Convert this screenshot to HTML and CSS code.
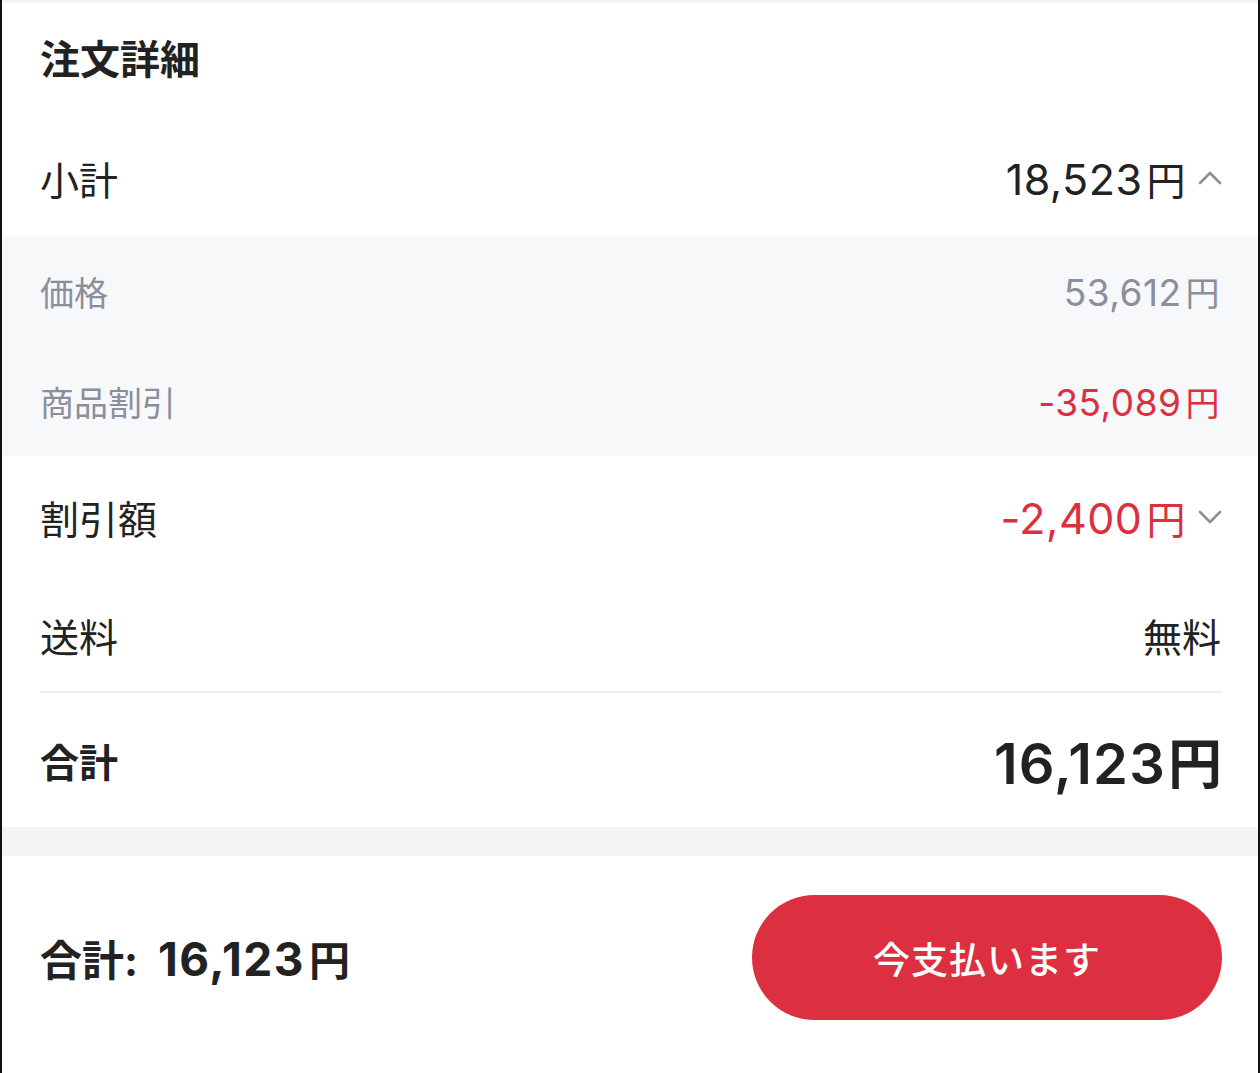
FILE: index.html
```html
<!DOCTYPE html>
<html lang="ja">
<head>
  <meta charset="UTF-8">
  <meta name="viewport" content="width=device-width, initial-scale=1.0">
  <title>注文詳細</title>
  <link rel="stylesheet" href="styles.css">
</head>
<body>
  <div class="pantalla">
    <div class="franja-superior"></div>

    <section class="detalle">
      <h2 class="titulo">注文詳細</h2>

      <div class="fila fila-subtotal">
        <span>小計</span>
        <span class="valor">18,523<span class="yen">円</span>
          <svg class="chevron" viewBox="0 0 24 16" fill="none">
            <path d="M2 13L12 3L22 13" stroke="#8b8e9b" stroke-width="2.6" stroke-linecap="round" stroke-linejoin="round"/>
          </svg>
        </span>
      </div>
    </section>

    <div class="desglose">
      <div class="fila fila-gris">
        <span>価格</span>
        <span class="valor">53,612<span class="yen">円</span></span>
      </div>
      <div class="fila fila-gris">
        <span>商品割引</span>
        <span class="valor rojo">-35,089<span class="yen">円</span></span>
      </div>
    </div>

    <section class="detalle">
      <div class="fila fila-descuento">
        <span>割引額</span>
        <span class="valor rojo">-2,400<span class="yen">円</span>
          <svg class="chevron" viewBox="0 0 24 16" fill="none">
            <path d="M2 3L12 13L22 3" stroke="#8b8e9b" stroke-width="2.6" stroke-linecap="round" stroke-linejoin="round"/>
          </svg>
        </span>
      </div>
      <div class="fila fila-envio">
        <span>送料</span>
        <span class="texto-envio">無料</span>
      </div>
      <div class="fila fila-total">
        <span>合計</span>
        <span class="valor total">16,123<span class="yen">円</span></span>
      </div>
    </section>

    <div class="separador"></div>

    <footer class="barra-pago">
      <div class="total-pie">合計: <span class="cifra">16,123<span class="yen">円</span></span></div>
      <button class="boton-pagar">今支払います</button>
    </footer>
  </div>
</body>
</html>
```

FILE: styles.css
```css
:root {
  --color-texto: #222222;
  --color-gris: #8b8e9b;
  --color-rojo: #dc2f3f;
  --color-fondo-gris: #f7f8fa;
  --color-borde: #eeeeee;
}

body {
  margin: 0;
  font-family: Inter, "Noto Sans CJK JP", sans-serif;
  color: var(--color-texto);
  background: #ffffff;
}

.pantalla {
  height: 1073px;
  border-left: 2px solid #111;
  border-right: 2px solid #111;
  box-sizing: border-box;
  display: flex;
  flex-direction: column;
  overflow: hidden;
}

.franja-superior {
  height: 3px;
  background: #f2f3f5;
}

.detalle {
  padding: 0 36px 0 38px;
}

.titulo {
  margin: 0;
  height: 117px;
  padding-bottom: 10px;
  box-sizing: border-box;
  display: flex;
  align-items: center;
  font-size: 40px;
  font-weight: 700;
}

.fila {
  display: flex;
  justify-content: space-between;
  align-items: center;
  font-size: 39px;
}

.valor {
  display: flex;
  align-items: baseline;
  font-size: 43px;
  letter-spacing: 0.5px;
}

.yen {
  font-size: 39px;
  margin-left: 4px;
}

.chevron {
  width: 24px;
  height: 16px;
  margin-left: 12px;
  align-self: center;
}

.fila-subtotal {
  height: 116px;
}

.desglose {
  background: var(--color-fondo-gris);
  padding: 0 40px 0 38px;
}

.fila-gris {
  height: 110px;
  font-size: 34px;
  color: var(--color-gris);
}

.fila-gris .valor {
  font-size: 37px;
  margin-right: -2px;
}

.fila-gris .yen {
  font-size: 34px;
}

.rojo {
  color: var(--color-rojo);
}

.fila-descuento {
  height: 122px;
}

.fila-envio {
  height: 113px;
  border-bottom: 2px solid var(--color-borde);
}

.texto-envio {
  margin-right: 1px;
}

.fila-total {
  height: 134px;
  font-weight: 700;
}

.fila-total .total {
  font-size: 56px;
  font-weight: 600;
  letter-spacing: 1.2px;
}

.fila-total .yen {
  font-size: 54px;
  font-weight: 700;
  margin-left: 2px;
  letter-spacing: 0;
}

.separador {
  height: 29px;
  background: #f4f4f4;
  border-bottom: 2px solid #ffffff;
}

.barra-pago {
  display: flex;
  justify-content: space-between;
  align-items: center;
  padding: 37px 36px 0 38px;
}

.total-pie {
  font-size: 42px;
  font-weight: 700;
  word-spacing: 10px;
}

.total-pie .cifra {
  font-size: 46px;
  letter-spacing: 1.5px;
}

.total-pie .yen {
  font-size: 41px;
}

.boton-pagar {
  width: 470px;
  height: 125px;
  border: none;
  border-radius: 63px;
  background: var(--color-rojo);
  color: #ffffff;
  font-family: inherit;
  font-size: 37px;
  font-weight: 500;
  letter-spacing: 1px;
  cursor: pointer;
}
```
